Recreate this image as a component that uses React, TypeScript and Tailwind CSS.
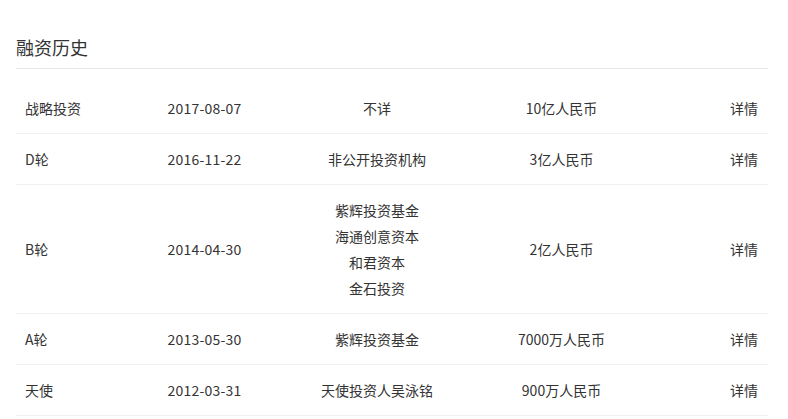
const rows = [
  { round: "战略投资", date: "2017-08-07", investors: ["不详"], amount: "10亿人民币" },
  { round: "D轮", date: "2016-11-22", investors: ["非公开投资机构"], amount: "3亿人民币" },
  {
    round: "B轮",
    date: "2014-04-30",
    investors: ["紫辉投资基金", "海通创意资本", "和君资本", "金石投资"],
    amount: "2亿人民币",
  },
  { round: "A轮", date: "2013-05-30", investors: ["紫辉投资基金"], amount: "7000万人民币" },
  { round: "天使", date: "2012-03-31", investors: ["天使投资人吴泳铭"], amount: "900万人民币" },
];

export default function App() {
  return (
    <div
      className="w-[788px] h-[419px] overflow-hidden bg-white pl-4 pr-5 pt-[35px] text-[#333]"
      style={{ fontFamily: '"Noto Sans CJK SC", "Noto Sans", sans-serif' }}
    >
      <h2 className="text-[18px] leading-6 pb-[9px] border-b border-[#e8e8e8] font-normal">
        融资历史
      </h2>

      <div className="mt-[14px] text-[14px] leading-[26px]">
        {rows.map((r) => (
          <div
            key={r.date}
            className="grid grid-cols-[117px_143px_202px_167px_1fr] items-center py-3 border-b border-[#f0f0f0]"
          >
            <span className="pl-[9px]">{r.round}</span>
            <span className="text-center tracking-[0.2px]">{r.date}</span>
            <div className="flex flex-col items-center">
              {r.investors.map((name) => (
                <span key={name}>{name}</span>
              ))}
            </div>
            <span className="text-center">{r.amount}</span>
            <span className="text-right pr-[10px]">详情</span>
          </div>
        ))}
      </div>
    </div>
  );
}
